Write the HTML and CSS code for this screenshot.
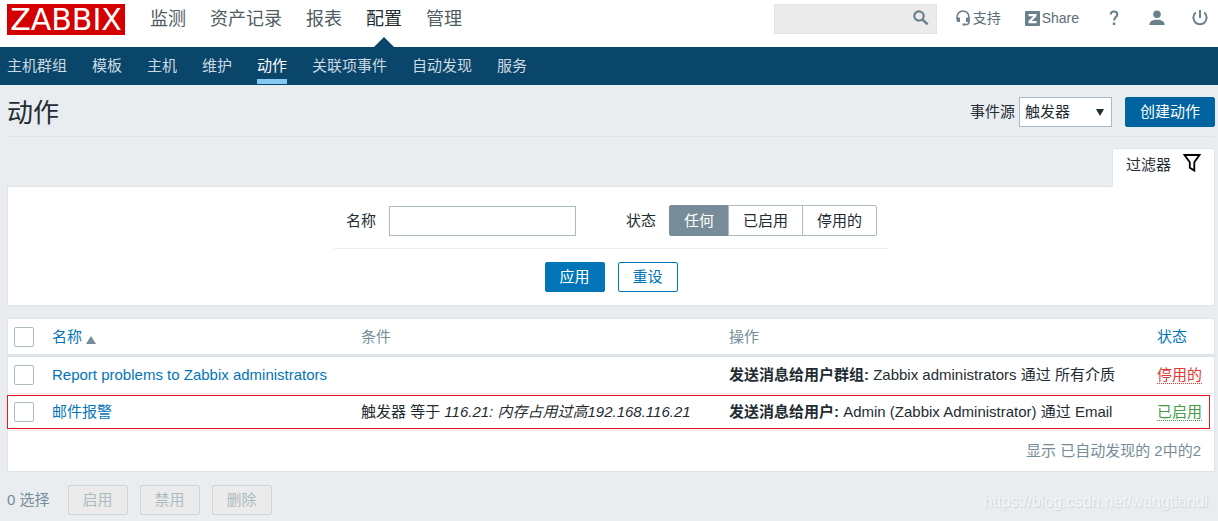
FILE: index.html
```html
<!DOCTYPE html>
<html lang="zh-CN">
<head>
<meta charset="utf-8">
<meta name="viewport" content="width=device-width, initial-scale=1">
<title>动作</title>
<link rel="stylesheet" href="styles.css">
</head>
<body>
<header class="top">
  <a class="logo" href="#">ZABBIX</a>
  <nav class="main-nav">
    <a href="#">监测</a>
    <a href="#">资产记录</a>
    <a href="#">报表</a>
    <a class="selected" href="#">配置</a>
    <a href="#">管理</a>
  </nav>
  <form class="search">
    <input class="search-input" type="text" aria-label="搜索">
    <button class="search-button" type="button" aria-label="搜索">
      <svg width="16" height="16" viewBox="0 0 16 16" fill="none" stroke="#6b808d"><circle cx="6" cy="6" r="4.7" stroke-width="2.2"/><path d="M9.6 9.6L14.6 14.4" stroke-width="2.6"/></svg>
    </button>
  </form>
  <div class="tools">
    <a class="tool" href="#">
      <svg width="14" height="16" viewBox="0 0 14 16"><path d="M1.1 9V6.8a5.900 5.900 0 0 1 11.8 0V12c0 1.500-1 2.400-2.400 2.400H8" fill="none" stroke="#6b808d" stroke-width="1.500"/><path d="M.4 7.500h3.600v4.500H2.400a2 2 0 0 1-2-2zM10 7.500h3.600v4.500H10zM6.500 13.400h2.500v2.200H6.500z" fill="#6b808d"/></svg>
      <span>支持</span>
    </a>
    <a class="tool share" href="#">
      <svg width="15" height="15" viewBox="0 0 15 15"><rect width="15" height="15" rx="1" fill="#6b808d"/><path d="M3.500 3h8v2.200L6.700 10h4.800v2.200h-8V10l4.800-4.800H3.500z" fill="#fff"/></svg>
      <span>Share</span>
    </a>
    <a class="tool help" href="#" aria-label="帮助">
      <svg width="10" height="16" viewBox="0 0 10 16"><path d="M1.700 4.600C1.700 2.700 3 1.500 5 1.500s3.300 1.100 3.300 2.900C8.300 7 5 7.200 5 10.600" fill="none" stroke="#6b808d" stroke-width="2.100"/><rect x="3.800" y="12.500" width="2.500" height="2.500" fill="#6b808d"/></svg>
    </a>
    <a class="tool user" href="#" aria-label="用户">
      <svg width="16" height="16" viewBox="0 0 16 16" fill="#6b808d"><circle cx="8" cy="4.300" r="3.800"/><path d="M.3 15c0-3.600 3-5.300 7.700-5.300s7.700 1.700 7.700 5.300z"/></svg>
    </a>
    <a class="tool" href="#" aria-label="退出">
      <svg width="16" height="16" viewBox="0 0 16 16" fill="none" stroke="#6b808d" stroke-width="2"><path d="M3.800 2.600a6.600 6.600 0 1 0 8.400 0M8 0v8"/></svg>
    </a>
  </div>
</header>

<nav class="sub-nav">
  <a href="#">主机群组</a>
  <a href="#">模板</a>
  <a href="#">主机</a>
  <a href="#">维护</a>
  <a class="selected" href="#">动作</a>
  <a href="#">关联项事件</a>
  <a href="#">自动发现</a>
  <a href="#">服务</a>
</nav>

<main class="content">
  <div class="title-bar">
    <h1>动作</h1>
    <div class="title-controls">
      <label for="source">事件源</label>
      <span class="select-wrap">
        <select id="source"><option>触发器</option></select>
      </span>
      <button class="btn create" type="button">创建动作</button>
    </div>
  </div>

  <div class="filter-tabs">
    <button class="filter-tab" type="button">过滤器
      <svg width="18" height="18" viewBox="0 0 18 18" fill="none" stroke="#000" stroke-width="1.800"><path d="M1.500 1h15L11.300 8.200V16.600L6.800 13.700V8.200z"/></svg>
    </button>
  </div>
  <form class="filter">
    <div class="filter-fields">
      <div class="field">
        <label for="name">名称</label>
        <input class="name-input" id="name" type="text">
      </div>
      <div class="field" role="radiogroup" aria-labelledby="status-label">
        <span id="status-label">状态</span>
        <div class="segments">
          <input type="radio" name="status" id="any" checked><label for="any">任何</label>
          <input type="radio" name="status" id="on"><label for="on">已启用</label>
          <input type="radio" name="status" id="off"><label for="off">停用的</label>
        </div>
      </div>
    </div>
    <div class="filter-buttons">
      <button class="btn" type="button">应用</button>
      <button class="btn outline" type="button">重设</button>
    </div>
  </form>

  <table class="list">
    <colgroup><col class="col-check"><col class="col-name"><col class="col-cond"><col class="col-op"><col class="col-status"></colgroup>
    <thead>
      <tr>
        <th><input class="check" type="checkbox" aria-label="全选"></th>
        <th><a href="#">名称<span class="sort"></span></a></th>
        <th>条件</th>
        <th>操作</th>
        <th><a href="#">状态</a></th>
      </tr>
    </thead>
    <tbody>
      <tr>
        <td><input class="check" type="checkbox" aria-label="Report problems to Zabbix administrators"></td>
        <td><a href="#">Report problems to Zabbix administrators</a></td>
        <td></td>
        <td><b>发送消息给用户群组:</b> Zabbix administrators 通过 所有介质</td>
        <td><a class="status off" href="#">停用的</a></td>
      </tr>
      <tr class="marked">
        <td><input class="check" type="checkbox" aria-label="邮件报警"></td>
        <td><a href="#">邮件报警</a></td>
        <td>触发器 等于 <em>116.21: 内存占用过高192.168.116.21</em></td>
        <td><b>发送消息给用户:</b> Admin (Zabbix Administrator) 通过 Email</td>
        <td><a class="status on" href="#">已启用</a></td>
      </tr>
    </tbody>
    <tfoot>
      <tr><td colspan="5">显示 已自动发现的 2中的2</td></tr>
    </tfoot>
  </table>

  <div class="actions">
    <span class="count">0 选择</span>
    <button class="btn" type="button" disabled>启用</button>
    <button class="btn" type="button" disabled>禁用</button>
    <button class="btn" type="button" disabled>删除</button>
    <span class="watermark">https://blog.csdn.net/wangtiandi</span>
  </div>
</main>
</body>
</html>
```
FILE: styles.css
```css
* {
  box-sizing: border-box;
}

body {
  margin: 0;
  background: #e9edf0;
  color: #1f2c33;
  font: 15px/18px "Liberation Sans", "Noto Sans CJK SC", sans-serif;
}

a {
  color: #0275b8;
  text-decoration: none;
}

svg {
  display: block;
}

input,
select,
button {
  font: inherit;
  color: inherit;
  margin: 0;
}

.top {
  display: flex;
  align-items: flex-start;
  height: 47px;
  padding: 4px 10px 0 7px;
  background: #fff;
}

.logo {
  width: 118px;
  height: 31px;
  background: #d40000;
  color: #fff;
  font-family: "DejaVu Sans", sans-serif;
  font-size: 30px;
  line-height: 31px;
  text-align: center;
}

.main-nav {
  display: flex;
  gap: 24px;
  height: 43px;
  margin-left: 25px;
  font-size: 18px;
  line-height: 30px;
}

.main-nav a {
  color: #4f5b63;
}

.main-nav .selected {
  position: relative;
  color: #1f2c33;
}

.main-nav .selected::after {
  content: "";
  position: absolute;
  left: 50%;
  bottom: 0;
  margin-left: -10px;
  border: 10px solid transparent;
  border-top: 0;
  border-bottom-color: #0a466a;
}

.search {
  display: flex;
  align-items: center;
  width: 163px;
  height: 30px;
  margin-left: auto;
  border: 1px solid #dfe4e7;
  background: #ebebeb;
}

.search-input {
  flex: 1;
  min-width: 0;
  border: 0;
  background: none;
}

.search-button {
  padding: 0 7px 3px;
  border: 0;
  background: none;
}

.tools {
  display: flex;
  align-items: center;
  height: 28px;
  margin-left: 19px;
  font-size: 14px;
}

.tool {
  display: flex;
  align-items: center;
  gap: 3px;
  color: #5d6d78;
}

.share {
  gap: 2px;
  margin-left: 24px;
}

.help {
  margin: 0 30px;
}

.user {
  margin-right: 27px;
}

.sub-nav {
  display: flex;
  gap: 25px;
  height: 38px;
  padding: 0 7px;
  background: #0a466a;
}

.sub-nav a {
  height: 37px;
  color: #cddae2;
  line-height: 37px;
}

.sub-nav .selected {
  border-bottom: 5px solid #84c8f4;
  color: #fff;
}

.content {
  padding: 0 3px 0 7px;
}

.title-bar {
  display: flex;
  justify-content: space-between;
  height: 52px;
  padding-top: 12px;
  border-bottom: 1px solid #dfe4e7;
}

h1 {
  margin: 0;
  font-size: 26px;
  font-weight: 400;
  line-height: 32px;
}

.title-controls {
  display: flex;
  align-items: center;
  gap: 4px;
  height: 30px;
}

.select-wrap {
  position: relative;
}

.select-wrap::after {
  content: "";
  position: absolute;
  right: 8px;
  top: 12px;
  border: 4px solid transparent;
  border-top: 7px solid #1f2c33;
  border-bottom: 0;
  pointer-events: none;
}

select {
  display: block;
  appearance: none;
  width: 93px;
  height: 30px;
  padding: 0 5px;
  border: 1px solid #acbbc2;
  border-radius: 0;
  background: #fff;
}

.btn {
  min-width: 60px;
  height: 30px;
  padding: 0 12px;
  border: 1px solid #0275b8;
  border-radius: 2px;
  background: #0275b8;
  color: #fff;
}

.create {
  min-width: 90px;
  margin-left: 9px;
  border-color: #0064a0;
  background: #0064a0;
}

.outline {
  background: #fff;
  color: #0275b8;
}

.btn:disabled {
  border-color: #ccd5d9;
  background: #ebebeb;
  color: #acbbc2;
}

.filter-tabs {
  display: flex;
  justify-content: flex-end;
  padding-top: 11px;
}

.filter-tab {
  position: relative;
  display: flex;
  align-items: flex-start;
  gap: 12px;
  height: 39px;
  margin-bottom: -1px;
  padding: 5px 13px 0 13px;
  border: 1px solid #dfe4e7;
  border-bottom: 0;
  border-radius: 2px 2px 0 0;
  background: #fff;
  line-height: 22px;
}

.filter {
  display: flex;
  flex-direction: column;
  align-items: center;
  padding: 18px 0 13px;
  border: 1px solid #dfe4e7;
  background: #fff;
}

.filter-fields {
  display: flex;
  gap: 50px;
  padding: 0 11px 12px 12px;
  border-bottom: 1px solid #ebeef0;
}

.field {
  display: flex;
  align-items: center;
  gap: 13px;
}

.name-input {
  width: 187px;
  height: 30px;
  border: 1px solid #acbbc2;
}

.segments {
  display: flex;
}

.segments input {
  position: absolute;
  opacity: 0;
}

.segments label {
  height: 31px;
  margin-left: -1px;
  padding: 0 14px;
  border: 1px solid #acbbc2;
  line-height: 29px;
}

.segments label:first-of-type {
  margin-left: 0;
  border-radius: 2px 0 0 2px;
}

.segments label:last-of-type {
  border-radius: 0 2px 2px 0;
}

.segments input:checked + label {
  border-color: #768d99;
  background: #768d99;
  color: #fff;
}

.filter-buttons {
  display: flex;
  gap: 13px;
  padding-top: 13px;
}

.list {
  width: 100%;
  margin-top: 12px;
  border: 1px solid #dfe4e7;
  border-spacing: 0;
  table-layout: fixed;
  background: #fff;
}

.col-check {
  width: 39px;
}

.col-name {
  width: 309px;
}

.col-cond {
  width: 368px;
}

.col-status {
  width: 62px;
}

.list th,
.list td {
  height: 37px;
  padding: 0 5px;
  border-bottom: 1px solid #ebeef0;
  font-weight: 400;
  text-align: left;
  white-space: nowrap;
}

.list th {
  height: 38px;
  border-bottom: 3px solid #dce2e6;
  color: #768d99;
}

.list tfoot td {
  height: 40px;
  padding-right: 13px;
  border-bottom: 0;
  color: #768d99;
  text-align: right;
}

.list .marked {
  position: relative;
}

.marked td:last-child::after {
  content: "";
  position: absolute;
  inset: 1px 4px 2px -1px;
  border: 1px solid #e8191f;
  pointer-events: none;
}

.check {
  display: block;
  appearance: none;
  width: 20px;
  height: 20px;
  margin: 0 1px;
  border: 1px solid #acbbc2;
  border-radius: 2px;
  background: #fff;
}

.sort {
  display: inline-block;
  margin-left: 4px;
  border: 5px solid transparent;
  border-top: 0;
  border-bottom: 8px solid #768d99;
  vertical-align: -2px;
}

.status {
  border-bottom: 1px dotted;
}

.off {
  color: #e33734;
}

.on {
  color: #429e47;
}

.actions {
  display: flex;
  align-items: center;
  gap: 12px;
  padding: 13px 7px 6px 0;
}

.count {
  margin-right: 6px;
  color: #768d99;
}

.watermark {
  margin-left: auto;
  padding-top: 4px;
  color: #f4f6f7;
  font-size: 16px;
  text-shadow: 1px 1px 1px #ccd2d6;
}
```
